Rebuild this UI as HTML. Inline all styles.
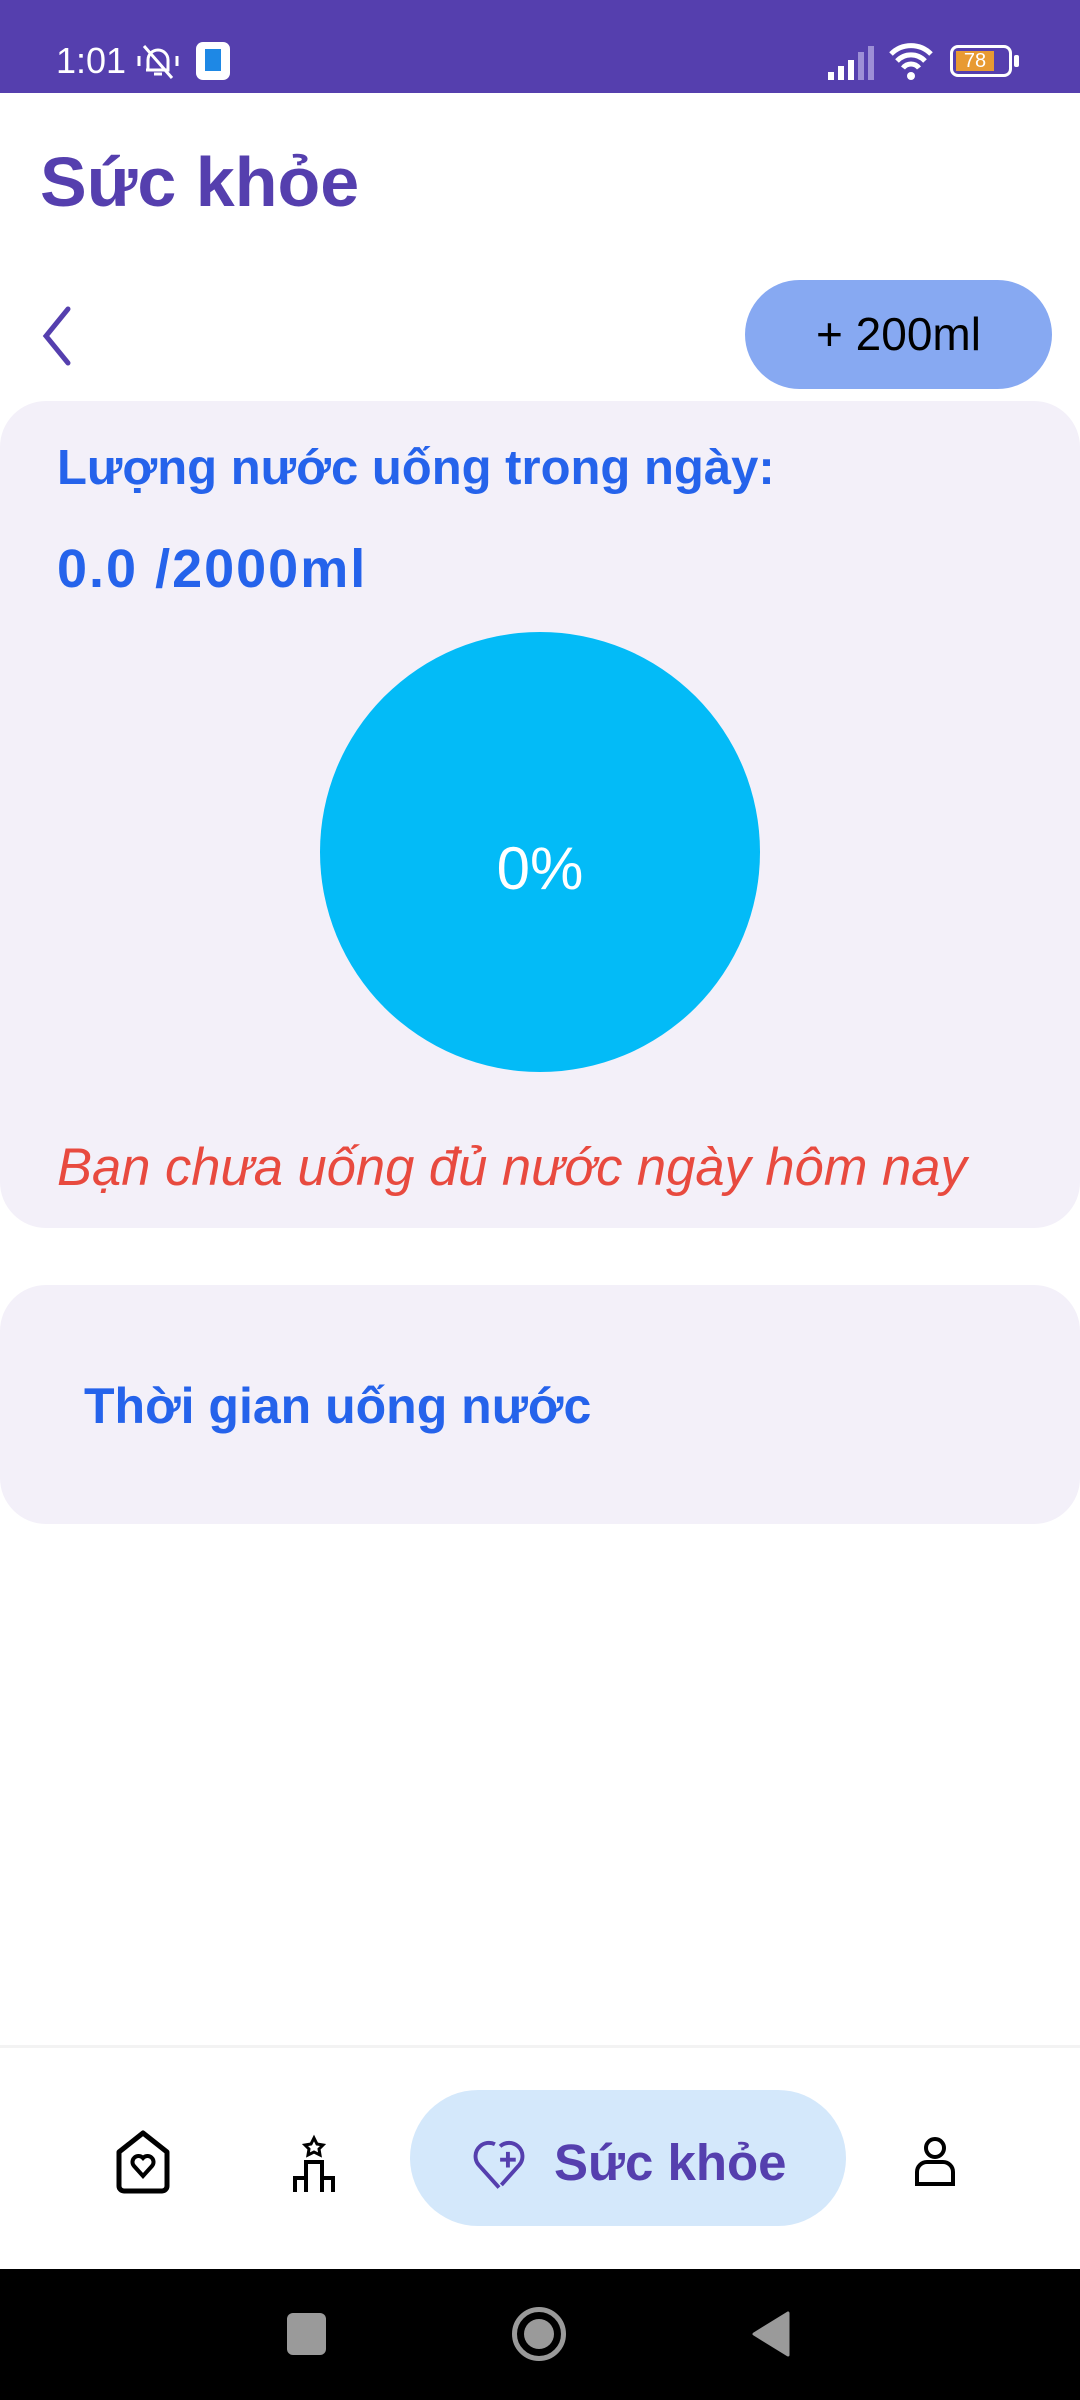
<!DOCTYPE html>
<html><head><meta charset="utf-8"><style>
*{margin:0;padding:0;box-sizing:border-box}
body{width:1080px;height:2400px;position:relative;background:#fff;font-family:"Liberation Sans",sans-serif;overflow:hidden}
.abs{position:absolute}
</style></head><body>
<div class="abs" style="left:0;top:0;width:1080px;height:93px;background:#553fae"></div>
<div class="abs" style="left:56px;top:40px;font-size:36px;color:#fff">1:01</div>
<svg class="abs" style="left:136px;top:42px" width="44" height="40" viewBox="0 0 44 40"><path d="M12 28 V18 a10 10 0 0 1 20 0 V28 H10 M18 32 h8 M8 4 L36 36 M3 14v10 M41 14v10" stroke="#fff" stroke-width="3" fill="none"/></svg>
<div class="abs" style="left:196px;top:42px;width:34px;height:38px;background:#fff;border-radius:7px"><div style="margin:7px 9px;width:16px;height:22px;background:#1e88e5"></div></div>
<svg class="abs" style="left:826px;top:44px" width="52" height="36"><rect x="2" y="28" width="6" height="8" fill="#fff"/><rect x="12" y="22" width="6" height="14" fill="#fff"/><rect x="22" y="16" width="6" height="20" fill="#fff"/><rect x="32" y="8" width="6" height="28" fill="#9d8fd6"/><rect x="42" y="2" width="6" height="34" fill="#9d8fd6"/></svg>
<svg class="abs" style="left:888px;top:40px" width="46" height="42" viewBox="0 0 46 42"><path d="M3 14a28 28 0 0 1 40 0 M9 21a19 19 0 0 1 28 0 M15 28a10 10 0 0 1 16 0" stroke="#fff" stroke-width="5" fill="none"/><circle cx="23" cy="36" r="4" fill="#fff"/></svg>
<div class="abs" style="left:950px;top:45px;width:62px;height:32px;border:3px solid #fff;border-radius:8px"><div style="margin:3px;width:38px;height:20px;background:#e89a32;color:#fff;font-size:20px;line-height:20px;text-align:center">78</div></div>
<div class="abs" style="left:1014px;top:55px;width:5px;height:12px;background:#fff;border-radius:2px"></div>

<div class="abs" style="left:40px;top:142px;font-size:70px;font-weight:bold;color:#553fae">Sức khỏe</div>
<svg class="abs" style="left:38px;top:305px" width="36" height="62"><path d="M30 4 L8 31 L30 58" stroke="#553fae" stroke-width="5" fill="none" stroke-linecap="round"/></svg>
<div class="abs" style="left:745px;top:280px;width:307px;height:109px;border-radius:55px;background:#87a9f2;color:#000;font-size:46px;text-align:center;line-height:109px">+ 200ml</div>

<div class="abs" style="left:0;top:401px;width:1080px;height:827px;border-radius:46px;background:#f3f0f9"></div>
<div class="abs" style="left:57px;top:440px;font-size:49px;font-weight:bold;color:#2563eb">Lượng nước uống trong ngày:</div>
<div class="abs" style="left:57px;top:538px;font-size:54px;font-weight:bold;color:#2563eb;letter-spacing:2px">0.0 /2000ml</div>
<div class="abs" style="left:320px;top:632px;width:440px;height:440px;border-radius:50%;background:#03bbf7"></div>
<div class="abs" style="left:320px;top:834px;width:440px;text-align:center;font-size:60px;color:#fff">0%</div>
<div class="abs" style="left:57px;top:1137px;font-size:52.5px;font-style:italic;color:#e84a3f">Bạn chưa uống đủ nước ngày hôm nay</div>

<div class="abs" style="left:0;top:1285px;width:1080px;height:239px;border-radius:46px;background:#f3f0f9"></div>
<div class="abs" style="left:84px;top:1377px;font-size:50px;font-weight:bold;color:#2563eb">Thời gian uống nước</div>

<div class="abs" style="left:0;top:2045px;width:1080px;height:3px;background:#f3f3f3"></div>
<svg class="abs" style="left:114px;top:2130px" width="58" height="64" viewBox="0 0 58 64"><path d="M5 22 L29 3 L53 22 V56 a5 5 0 0 1 -5 5 H10 a5 5 0 0 1 -5 -5 Z" stroke="#000" stroke-width="5" fill="none" stroke-linejoin="round"/><path d="M29 46 L20 36 a6 6 0 0 1 9 -8 a6 6 0 0 1 9 8 Z" stroke="#000" stroke-width="4" fill="none"/></svg>
<svg class="abs" style="left:292px;top:2134px" width="56" height="60" viewBox="0 0 56 60"><path d="M3 58 V44 H14 V58 M14 58 V28 H30 V58 M30 44 H41 V58" stroke="#000" stroke-width="4" fill="none"/><path d="M22 4 l3 6 6 1 -4 4 1 6 -6 -3 -6 3 1 -6 -4 -4 6 -1z" stroke="#000" stroke-width="3" fill="none"/></svg>
<div class="abs" style="left:410px;top:2090px;width:436px;height:136px;border-radius:68px;background:#d4e8fb"></div>
<svg class="abs" style="left:470px;top:2134px" width="58" height="58" viewBox="0 0 52 52"><path d="M26 48 L8 28 a11 11 0 0 1 18 -16 a11 11 0 0 1 18 16 Z" stroke="#553fae" stroke-width="3.5" fill="none" stroke-dasharray="60 6"/><path d="M34 16 v14 M27 23 h14" stroke="#553fae" stroke-width="3.5"/></svg>
<div class="abs" style="left:554px;top:2133px;font-size:51px;font-weight:bold;color:#553fae">Sức khỏe</div>
<svg class="abs" style="left:912px;top:2136px" width="46" height="52" viewBox="0 0 46 52"><circle cx="23" cy="12" r="9" stroke="#000" stroke-width="4" fill="none"/><path d="M5 48 V36 a10 10 0 0 1 10 -10 H31 a10 10 0 0 1 10 10 V48 Z" stroke="#000" stroke-width="4" fill="none"/></svg>

<div class="abs" style="left:0;top:2269px;width:1080px;height:131px;background:#000"></div>
<div class="abs" style="left:287px;top:2313px;width:39px;height:42px;border-radius:6px;background:#9a9a9a"></div>
<div class="abs" style="left:512px;top:2307px;width:54px;height:54px;border-radius:50%;border:5px solid #9a9a9a"><div style="margin:7px;width:30px;height:30px;border-radius:50%;background:#9a9a9a"></div></div>
<svg class="abs" style="left:750px;top:2311px" width="42" height="46"><path d="M38 2 V44 L4 23 Z" fill="#9a9a9a" stroke="#9a9a9a" stroke-width="3" stroke-linejoin="round"/></svg>
</body></html>
